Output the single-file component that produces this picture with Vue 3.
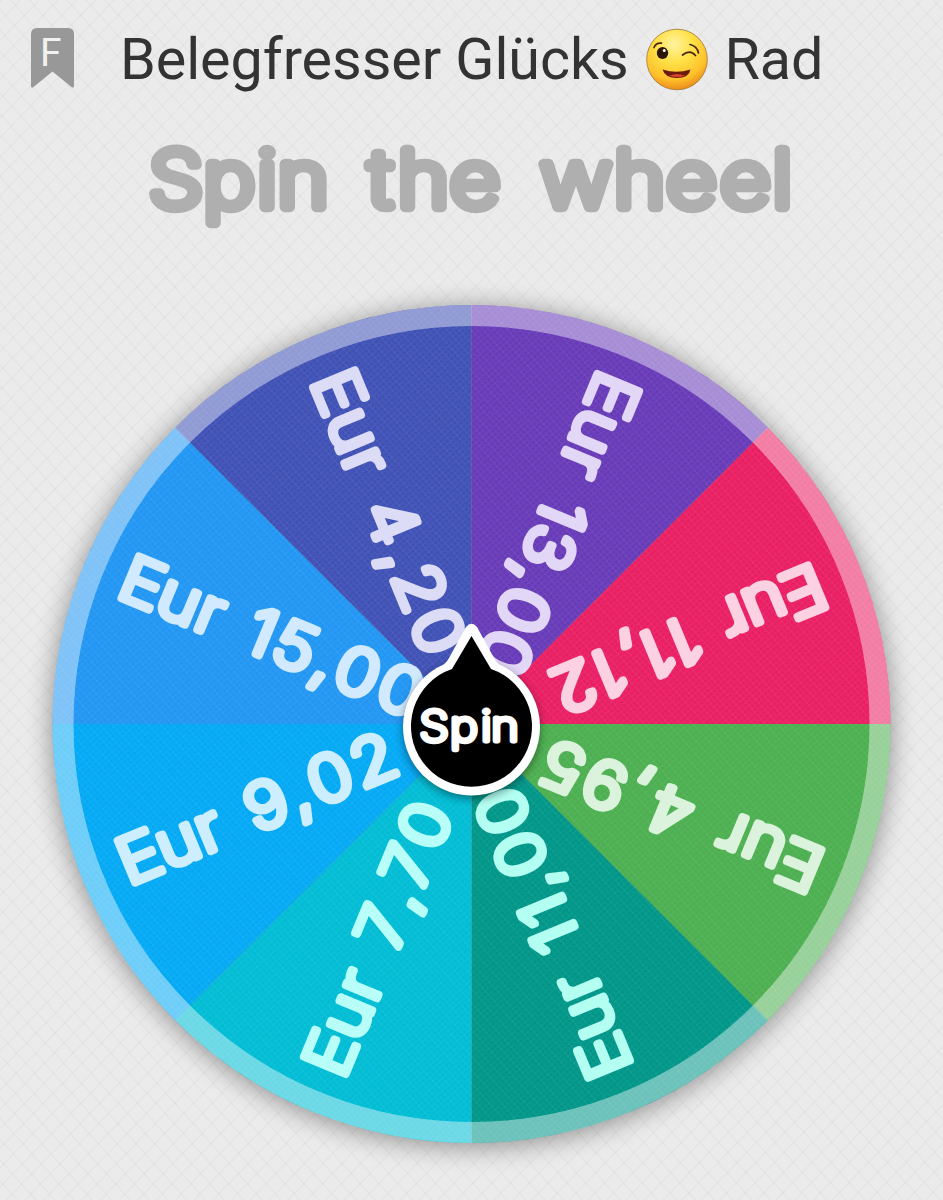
<template>
  <main class="page">
    <header class="header">
      <svg class="bookmark" viewBox="0 0 43 60">
        <path d="M6 0H37Q43 0 43 6V58Q43 60.500 40.500 59L21.500 43.500L2.500 59Q0 60.500 0 58V6Q0 0 6 0Z" />
        <text x="9" y="38.300">F</text>
      </svg>
      <h1 class="name">
        <span class="first">Belegfresser Glücks</span>
        <svg class="emoji" viewBox="0 0 64 64">
          <defs>
            <radialGradient id="face" cx="0.45" cy="0.25" r="0.78">
              <stop offset="0" stop-color="#fff3a0" />
              <stop offset="0.4" stop-color="#ffe045" />
              <stop offset="0.75" stop-color="#fdc02a" />
              <stop offset="1" stop-color="#ea8218" />
            </radialGradient>
          </defs>
          <circle cx="32" cy="31.500" r="30.300" fill="url(#face)" stroke="#a8803c" stroke-width="0.900" />
          <ellipse cx="17.500" cy="25" rx="5.700" ry="5.900" fill="#2d1709" />
          <circle cx="19.200" cy="22.600" r="1.500" fill="#fff" />
          <path d="M9 19.500Q11 14.500 16.500 15.200M45 16.500Q52 18 53.500 25M37.500 27Q45 21 50.500 27.500" class="line" />
          <path d="M17.500 41.500Q31.500 46 45.500 41.500Q44 50 32 50Q20 50 17.500 41.500Z" fill="#6b1a10" />
          <path d="M24 47.700Q32 44.500 40 47.700Q32 50.500 24 47.700Z" fill="#d8432b" />
        </svg>
        <span>Rad</span>
      </h1>
    </header>

    <svg class="title" viewBox="0 120 943 130">
      <text class="round" :x="stretch(titleCentres)" y="207.300" :transform="`scale(${STRETCH} 1)`">Spin the wheel</text>
    </svg>

    <svg class="wheel" viewBox="0 250 943 950">
      <defs>
        <pattern id="weave" width="9" height="9" patternUnits="userSpaceOnUse" patternTransform="rotate(-42)">
          <path d="M0 1H9M0 5.500H6M2.500 0V9M7 3V9" stroke="#fff" stroke-width="0.700" opacity="0.1" />
        </pattern>
        <filter id="blur" x="-20%" y="-20%" width="140%" height="140%">
          <feGaussianBlur stdDeviation="13" />
        </filter>
        <filter id="hubBlur" x="-20%" y="-20%" width="140%" height="140%">
          <feGaussianBlur stdDeviation="4" />
        </filter>
      </defs>

      <circle cx="471.500" cy="727" r="420" class="shadow" filter="url(#blur)" />

      <g transform="translate(471.5 724)">
        <path
          v-for="(slice, i) in slices"
          :key="slice.amount"
          :d="wedge"
          :fill="slice.color"
          :transform="`rotate(${i * 45})`"
        />
        <circle r="419" fill="url(#weave)" />
        <circle r="408.500" class="rim" />
        <text
          v-for="(slice, i) in slices"
          :key="slice.amount"
          class="round label"
          :x="labelX(slice.amount)"
          y="18"
          :fill="slice.text"
          :stroke="slice.text"
          :transform="`rotate(${i * 45 + 22.5}) scale(${STRETCH} 1)`"
        >Eur {{ slice.amount }}</text>
      </g>

      <circle cx="471.500" cy="730" r="69" class="shadow" filter="url(#hubBlur)" />
      <path class="hub-border" d="M466 627Q471.500 620.500 477 627L494 658Q495.500 661.500 499 664.200A68.500 68.500 0 1 1 444 664.200Q447.500 661.500 449 658Z" />
      <path class="hub" d="M471.500 636L491 669A60.500 60.500 0 1 1 452 669Z" />
      <text class="round spin" :x="stretch(spinCentres)" y="741" :transform="`scale(${STRETCH} 1)`">Spin</text>
    </svg>
  </main>
</template>

<script setup>
// Slices go clockwise, starting at nine o'clock
const slices = [
  { amount: '15,00', color: '#2196f3', text: '#d2eaff' },
  { amount: '4,20', color: '#3f51b5', text: '#dcdcf6' },
  { amount: '13,00', color: '#673ab7', text: '#e2d7f6' },
  { amount: '11,12', color: '#e91e63', text: '#fcd2e2' },
  { amount: '4,95', color: '#4caf50', text: '#dbf2dc' },
  { amount: '11,00', color: '#009688', text: '#b3fff2' },
  { amount: '7,70', color: '#00bcd4', text: '#b8fffa' },
  { amount: '9,02', color: '#03a9f4', text: '#cdeefe' },
]

const wedge = 'M0 0L-419 0A419 419 0 0 1 -296.28 -296.28Z'

// Letters are drawn a bit wider than the font has them
const STRETCH = 1.12

// Centre of each letter
const titleCentres = [176, 229, 267, 303, 344, 380.5, 423.5, 475, 520, 576, 639.5, 691.5, 745.5, 782.4]
const spinCentres = [434.2, 464, 486.3, 505]

const glyphWidth = { 0: 41, 1: 24, 2: 42, 3: 38, 4: 46, 5: 38, 7: 38, 9: 41, ',': 17 }

function stretch(centres) {
  return centres.map((x) => (x / STRETCH).toFixed(2)).join(' ')
}

function labelX(amount) {
  const centres = [-358, -317, -283.5, -256]
  let left = -241
  for (const char of amount) {
    centres.push(left + glyphWidth[char] / 2)
    left += glyphWidth[char] + 5.5
  }
  return stretch(centres)
}
</script>

<style>
body {
  background: #ebebeb;
}
</style>

<style scoped>
.page {
  display: flex;
  flex-direction: column;
  width: 943px;
  height: 1200px;
  overflow: hidden;
  background:
    repeating-linear-gradient(48deg, transparent 0 11.500px, rgba(0, 0, 0, 0.028) 12.500px 13px, transparent 14px),
    repeating-linear-gradient(-46deg, transparent 0 11px, rgba(0, 0, 0, 0.028) 12px 12.500px, transparent 13.500px),
    #ebebeb;
}

.header {
  display: flex;
  align-items: flex-start;
  box-sizing: border-box;
  height: 120px;
  padding: 28px 0 0 31px;
}

.bookmark {
  width: 43px;
  height: 60px;
  margin-right: 46px;
  fill: #989898;
}

.bookmark text {
  font: 400 39px Roboto, sans-serif;
  fill: #f2f2f2;
}

.name {
  display: flex;
  margin: 0;
  color: #333;
  font: 400 57.500px/63px Roboto, sans-serif;
  letter-spacing: -0.06px;
  white-space: nowrap;
}

.first {
  width: 525px;
}

.emoji {
  width: 64px;
  height: 64px;
  margin-right: 15.500px;
}

.line {
  fill: none;
  stroke: #4a2810;
  stroke-width: 1.7;
  stroke-linecap: round;
}

.title {
  width: 943px;
  height: 130px;
  fill: #afafaf;
  stroke: #afafaf;
}

.round {
  font-family: Inter, sans-serif;
  font-weight: 200;
  text-anchor: middle;
  stroke-linejoin: round;
}

.title .round {
  font-size: 78px;
  stroke-width: 10.300;
}

.wheel {
  width: 943px;
  height: 950px;
}

.shadow {
  fill: #000;
  opacity: 0.38;
}

.rim {
  fill: none;
  stroke: #fff;
  stroke-width: 21;
  stroke-opacity: 0.42;
}

.label {
  font-size: 63px;
  stroke-width: 7.500;
}

.hub-border {
  fill: #fff;
}

.hub {
  fill: #000;
}

.spin {
  font-size: 42px;
  fill: #fff;
  stroke: #fff;
  stroke-width: 5;
}
</style>
